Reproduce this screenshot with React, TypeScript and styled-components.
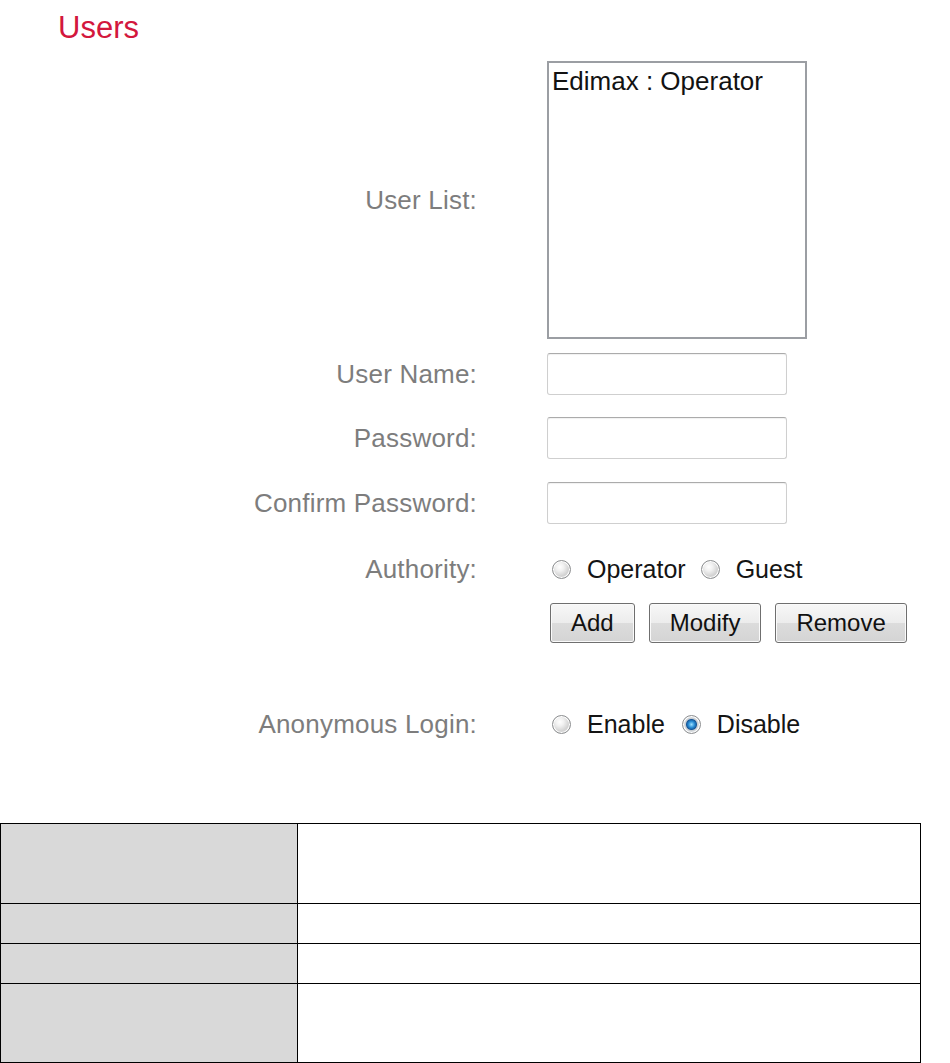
import React from 'react'
import styled, { createGlobalStyle } from 'styled-components'

const GlobalStyle = createGlobalStyle`
  html, body {
    margin: 0;
    padding: 0;
    background: #ffffff;
  }
  body {
    font-family: 'Liberation Sans', Arial, sans-serif;
  }
`

const Page = styled.div`
  width: 950px;
  padding-top: 12px;
`

const Title = styled.div`
  padding-left: 58px;
  font-size: 31px;
  line-height: 31px;
  color: #d3173d;
`

const Row = styled.div<{ $mt: number; $h: number }>`
  display: grid;
  grid-template-columns: 477px auto;
  column-gap: 70px;
  align-items: center;
  margin-top: ${(p) => p.$mt}px;
  height: ${(p) => p.$h}px;
`

const Label = styled.div`
  text-align: right;
  font-size: 26px;
  letter-spacing: 0.2px;
  color: #7d7d7d;
  white-space: nowrap;
`

const ListBox = styled.div`
  box-sizing: border-box;
  width: 260px;
  height: 278px;
  border: 2px solid #9b9ea3;
  padding: 3px 3px;
  font-size: 26px;
  line-height: 30px;
  color: #121212;
`

const TextInput = styled.div`
  box-sizing: border-box;
  width: 240px;
  height: 42px;
  border: 1px solid #cfcfcf;
  border-top-color: #ababab;
  border-radius: 3px;
  background: #ffffff;
  box-shadow: inset 0 1px 1px rgba(0, 0, 0, 0.06);
`

const RadioGroup = styled.div`
  display: flex;
  align-items: center;
  padding-left: 5px;
  font-size: 25px;
  color: #141414;
`

const RadioOption = styled.label<{ $gap: number }>`
  display: flex;
  align-items: center;
  margin-right: ${(p) => p.$gap}px;
`

const RadioDot = styled.span<{ $checked?: boolean }>`
  box-sizing: border-box;
  width: 19px;
  height: 19px;
  border-radius: 50%;
  border: 1px solid #8c8e90;
  margin-right: 16px;
  background: ${(p) =>
    p.$checked
      ? 'radial-gradient(circle at 50% 50%, #9ee0ff 0, #2b8fd6 3px, #17589a 5px, #c9cdd1 6px, #eef0f2 9px)'
      : 'radial-gradient(circle at 40% 35%, #ffffff 0, #f1f1f1 4px, #d3d3d3 9px)'};
  box-shadow: inset 0 0 0 1px #ffffff;
`

const ButtonBar = styled.div`
  display: flex;
  gap: 14px;
  padding-left: 3px;
`

const Button = styled.button`
  box-sizing: border-box;
  height: 40px;
  padding: 0 20px;
  font-family: 'Liberation Sans', Arial, sans-serif;
  font-size: 24px;
  color: #111111;
  border: 1px solid #6f6f6f;
  border-radius: 3px;
  background: linear-gradient(#f7f7f7, #ececec 50%, #dcdcdc 51%, #d4d4d4);
  box-shadow: inset 0 0 0 1px #fafafa;
`

const InfoTable = styled.table`
  margin-top: 84px;
  width: 921px;
  border-collapse: collapse;
`

const KeyCell = styled.td<{ $h: number }>`
  width: 296px;
  height: ${(p) => p.$h}px;
  padding: 0;
  border: 1px solid #000000;
  background: #d9d9d9;
`

const ValueCell = styled.td`
  padding: 0;
  border: 1px solid #000000;
  background: #ffffff;
`

const tableRows = [79, 39, 39, 78]

export default function App() {
  return (
    <Page>
      <GlobalStyle />
      <Title>Users</Title>

      <Row $mt={18} $h={278}>
        <Label>User List:</Label>
        <ListBox>Edimax : Operator</ListBox>
      </Row>

      <Row $mt={14} $h={42}>
        <Label>User Name:</Label>
        <TextInput />
      </Row>

      <Row $mt={22} $h={42}>
        <Label>Password:</Label>
        <TextInput />
      </Row>

      <Row $mt={23} $h={42}>
        <Label>Confirm Password:</Label>
        <TextInput />
      </Row>

      <Row $mt={30} $h={30}>
        <Label>Authority:</Label>
        <RadioGroup>
          <RadioOption $gap={15}>
            <RadioDot />
            Operator
          </RadioOption>
          <RadioOption $gap={0}>
            <RadioDot />
            Guest
          </RadioOption>
        </RadioGroup>
      </Row>

      <Row $mt={19} $h={40}>
        <span />
        <ButtonBar>
          <Button>Add</Button>
          <Button>Modify</Button>
          <Button>Remove</Button>
        </ButtonBar>
      </Row>

      <Row $mt={66} $h={30}>
        <Label>Anonymous Login:</Label>
        <RadioGroup>
          <RadioOption $gap={17}>
            <RadioDot />
            Enable
          </RadioOption>
          <RadioOption $gap={0}>
            <RadioDot $checked />
            Disable
          </RadioOption>
        </RadioGroup>
      </Row>

      <InfoTable>
        <tbody>
          {tableRows.map((h, i) => (
            <tr key={i}>
              <KeyCell $h={h} />
              <ValueCell />
            </tr>
          ))}
        </tbody>
      </InfoTable>
    </Page>
  )
}
